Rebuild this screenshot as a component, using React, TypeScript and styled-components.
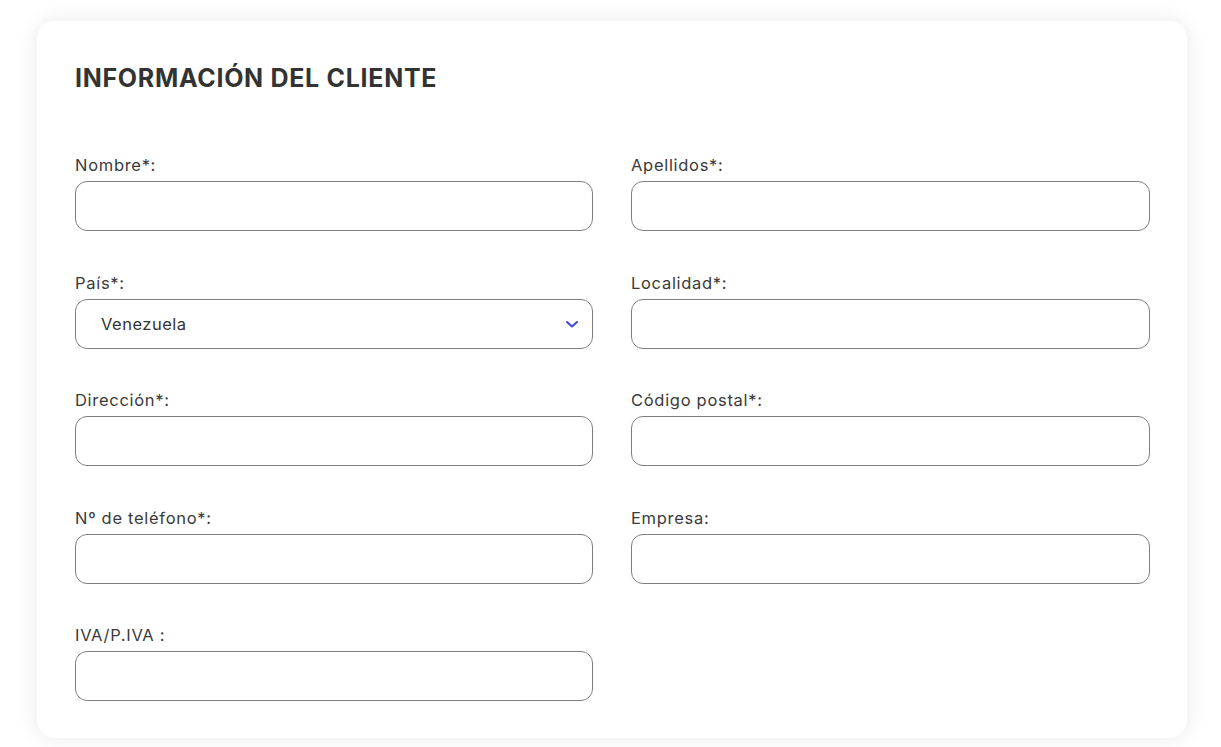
import React from "react";
import styled, { createGlobalStyle } from "styled-components";

const Global = createGlobalStyle`
  html, body { margin: 0; padding: 0; background: #ffffff; }
  body { font-family: "Inter", "Noto Sans", sans-serif; }
  * { box-sizing: border-box; }
`;

const Page = styled.div`
  width: 1221px;
  height: 747px;
  padding: 21px 34px 0 37px;
  overflow: hidden;
  background: #ffffff;
`;

const Card = styled.section`
  width: 1150px;
  background: #ffffff;
  border-radius: 18px;
  box-shadow: 0 0 22px rgba(0, 0, 0, 0.09);
  padding: 39px 37px 37px 38px;
`;

const Title = styled.h2`
  margin: 0 0 57px;
  font-family: "Inter", sans-serif;
  font-weight: 700;
  font-size: 25px;
  line-height: 36px;
  letter-spacing: 0.7px;
  color: #333333;
`;

const Grid = styled.div`
  display: grid;
  grid-template-columns: 518px 519px;
  column-gap: 38px;
  row-gap: 39.5px;
`;

const Field = styled.div`
  display: flex;
  flex-direction: column;
  gap: 4px;
`;

const Label = styled.label`
  font-family: "Inter", sans-serif;
  font-weight: 400;
  font-size: 16.5px;
  line-height: 24px;
  color: #3a3a3a;
  letter-spacing: 0.7px;
`;

const Input = styled.input`
  height: 50px;
  width: 100%;
  border: 1px solid #7f7f7f;
  border-radius: 12px;
  background: #ffffff;
  padding: 0 25px;
  font-family: "Inter", sans-serif;
  font-size: 16px;
  color: #333;
  outline: none;
`;

const SelectBox = styled.div`
  height: 50px;
  border: 1px solid #7f7f7f;
  border-radius: 12px;
  display: flex;
  align-items: center;
  padding: 0 25px;
  font-family: "Inter", sans-serif;
  font-size: 16.5px;
  letter-spacing: 0.5px;
  color: #333333;
`;

const SelectValue = styled.span`
  flex: 1;
`;

const Chevron = styled.svg`
  width: 14px;
  height: 10px;
  margin-right: -12px;
`;

const fields: { label: string; select?: string }[] = [
  { label: "Nombre*:" },
  { label: "Apellidos*:" },
  { label: "País*:", select: "Venezuela" },
  { label: "Localidad*:" },
  { label: "Dirección*:" },
  { label: "Código postal*:" },
  { label: "Nº de teléfono*:" },
  { label: "Empresa:" },
  { label: "IVA/P.IVA :" },
];

export default function App() {
  return (
    <>
      <Global />
      <Page>
        <Card>
          <Title>INFORMACIÓN DEL CLIENTE</Title>
          <Grid>
            {fields.map((f) => (
              <Field key={f.label}>
                <Label>{f.label}</Label>
                {f.select ? (
                  <SelectBox>
                    <SelectValue>{f.select}</SelectValue>
                    <Chevron viewBox="0 0 14 10">
                      <path
                        d="M2 3 L7 7.5 L12 3"
                        fill="none"
                        stroke="#3d47e0"
                        strokeWidth="2"
                        strokeLinecap="round"
                        strokeLinejoin="round"
                      />
                    </Chevron>
                  </SelectBox>
                ) : (
                  <Input type="text" />
                )}
              </Field>
            ))}
          </Grid>
        </Card>
      </Page>
    </>
  );
}
